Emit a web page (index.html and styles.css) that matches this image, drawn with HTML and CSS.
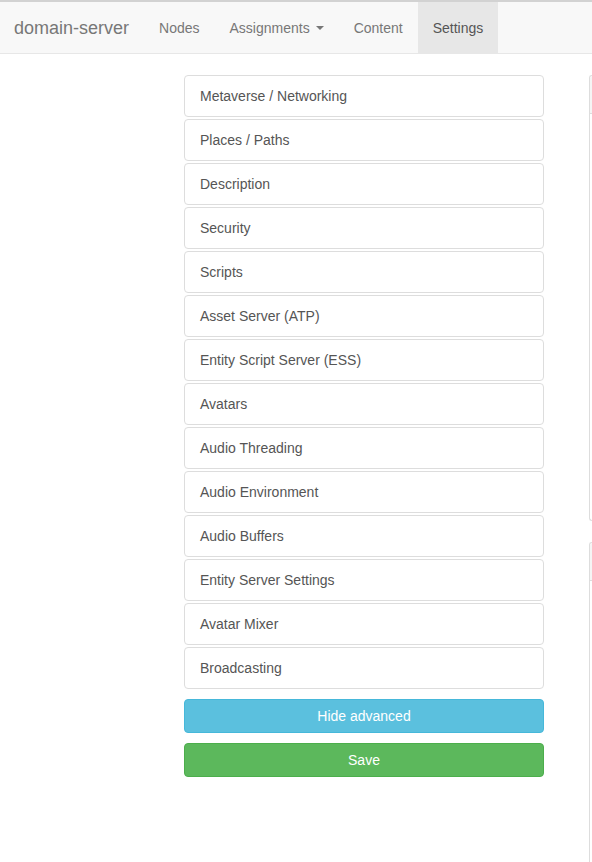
FILE: index.html
```
<!DOCTYPE html>
<html>
<head>
<meta charset="utf-8">
<title>domain-server</title>
<link rel="stylesheet" href="styles.css">
</head>
<body>
<nav class="navbar">
  <a class="brand">domain-server</a>
  <ul class="nav">
    <li><a>Nodes</a></li>
    <li><a>Assignments <span class="caret"></span></a></li>
    <li><a>Content</a></li>
    <li class="active"><a>Settings</a></li>
  </ul>
</nav>
<div class="page">
  <div class="sidebar">
    <ul class="pills">
      <li><a>Metaverse / Networking</a></li>
      <li><a>Places / Paths</a></li>
      <li><a>Description</a></li>
      <li><a>Security</a></li>
      <li><a>Scripts</a></li>
      <li><a>Asset Server (ATP)</a></li>
      <li><a>Entity Script Server (ESS)</a></li>
      <li><a>Avatars</a></li>
      <li><a>Audio Threading</a></li>
      <li><a>Audio Environment</a></li>
      <li><a>Audio Buffers</a></li>
      <li><a>Entity Server Settings</a></li>
      <li><a>Avatar Mixer</a></li>
      <li><a>Broadcasting</a></li>
    </ul>
    <button class="btn btn-info">Hide advanced</button>
    <button class="btn btn-success">Save</button>
  </div>
  <div class="content">
    <div class="panel panel-first">
      <div class="panel-heading"></div>
      <div class="panel-body"></div>
    </div>
    <div class="panel panel-second">
      <div class="panel-heading"></div>
      <div class="panel-body"></div>
    </div>
  </div>
</div>
</body>
</html>
```
FILE: styles.css
```
html, body {
  margin: 0;
  padding: 0;
  overflow: hidden;
  height: 862px;
  background: #fff;
  font-family: "Liberation Sans", Arial, sans-serif;
  font-size: 14px;
  line-height: 20px;
  color: #333;
}

.navbar {
  display: flex;
  align-items: stretch;
  height: 51px;
  background: #f8f8f8;
  border-top: 2px solid #d2d2d2;
  border-bottom: 1px solid #e7e7e7;
  margin-bottom: 21px;
}

.brand {
  font-size: 18px;
  color: #777;
  padding: 0 15px 0 14px;
  display: flex;
  align-items: center;
  line-height: 20px;
}

.nav {
  list-style: none;
  margin: 0;
  padding: 0;
  display: flex;
}

.nav li a {
  display: flex;
  align-items: center;
  height: 100%;
  padding: 0 15px;
  color: #777;
  box-sizing: border-box;
}

.nav li.active a {
  background: #e7e7e7;
  color: #555;
}

.caret {
  display: inline-block;
  width: 0;
  height: 0;
  margin-left: 6px;
  border-top: 4px solid #777;
  border-left: 4px solid transparent;
  border-right: 4px solid transparent;
}

.page {
  display: flex;
  align-items: flex-start;
  padding-left: 184px;
}

.sidebar {
  width: 360px;
  flex: none;
  display: flex;
  flex-direction: column;
}

.pills {
  list-style: none;
  margin: 0;
  padding: 0;
  display: flex;
  flex-direction: column;
  gap: 2px;
}

.pills li a {
  display: block;
  padding: 10px 15px;
  border: 1px solid #ddd;
  border-radius: 4px;
  color: #555;
  background: #fff;
}

.btn {
  font-family: inherit;
  font-size: 14px;
  line-height: 20px;
  padding: 6px 12px;
  border-radius: 4px;
  color: #fff;
  border: 1px solid transparent;
  width: 100%;
  margin-top: 10px;
  cursor: pointer;
}

.btn-info {
  background: #5bc0de;
  border-color: #46b8da;
}

.btn-success {
  background: #5cb85c;
  border-color: #4cae4c;
}

.content {
  margin-left: 45px;
  flex: 1;
  min-width: 0;
  display: flex;
  flex-direction: column;
  gap: 21px;
}

.panel {
  border: 1px solid #ddd;
  border-right: none;
  border-radius: 4px 0 0 4px;
  background: #fff;
}

.panel-heading {
  height: 37px;
  background: #f5f5f5;
  border-bottom: 1px solid #ddd;
  border-radius: 3px 0 0 0;
}

.panel-first .panel-body {
  height: 406px;
}

.panel-second {
  border-bottom: none;
  border-radius: 4px 0 0 0;
}

.panel-second .panel-body {
  height: 281px;
}
```
